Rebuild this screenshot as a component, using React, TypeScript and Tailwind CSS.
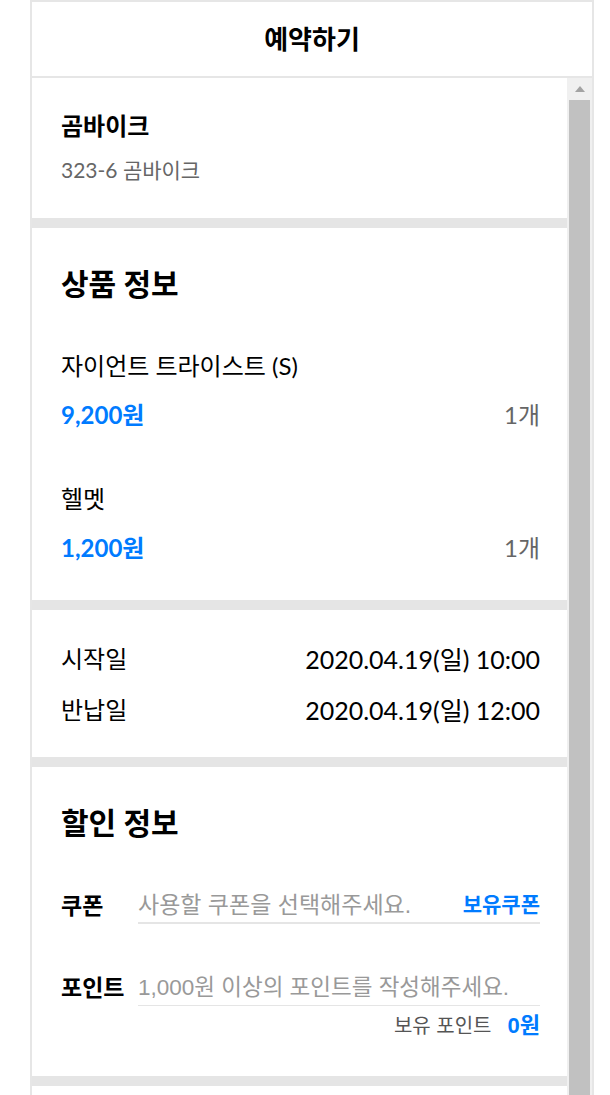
import React from "react";

const items = [
  { name: "자이언트 트라이스트 (S)", price: "9,200원", count: "1개" },
  { name: "헬멧", price: "1,200원", count: "1개" },
];

const lato = "font-['Lato','Noto_Sans_CJK_KR',sans-serif]";
const arial = "font-['Liberation_Sans','Noto_Sans_CJK_KR',sans-serif]";

function Divider() {
  return <div className="h-[10px] bg-[#e5e5e5]" />;
}

function Scrollbar() {
  return (
    <div className="w-[25px] flex flex-col bg-[#f0f0f0]">
      <div className="h-[22px] flex items-center justify-center">
        <svg width="10" height="6" viewBox="0 0 10 6">
          <path d="M0 6 L5 0 L10 6 Z" fill="#a3a3a3" />
        </svg>
      </div>
      <div className="flex-1 mx-[2px] bg-[#c1c1c1]" />
    </div>
  );
}

export default function App() {
  return (
    <div className={`h-[1095px] overflow-hidden bg-white text-black ${lato}`}>
      <div className="ml-[30px] w-[564px] h-[1100px] flex flex-col border-x-2 border-t-2 border-[#e6e6e6]">
        <header className="h-[76px] shrink-0 flex items-center justify-center border-b-2 border-[#e6e6e6]">
          <h1 className="text-[26px] font-bold">예약하기</h1>
        </header>
        <div className="flex flex-1">
          <div className="flex-1">
            <section className="pl-[29px] pr-[27px] pt-[34px] pb-[36px]">
              <h2 className="text-[24px] leading-[28px] font-bold">곰바이크</h2>
              <p className="mt-[18px] text-[21px] leading-[24px] text-[#666]">323-6 곰바이크</p>
            </section>
            <Divider />
            <section className="pl-[29px] pr-[27px] pt-[37px] pb-[38px]">
              <h2 className="text-[30px] leading-[36px] font-bold">상품 정보</h2>
              {items.map((item, i) => (
                <div key={i} className={i === 0 ? "mt-[51px]" : "mt-[56px]"}>
                  <p className="text-[24px] leading-[28px]">{item.name}</p>
                  <div className="mt-[21px] flex items-center justify-between text-[24px] leading-[28px]">
                    <span className="font-bold text-[#007bff]">{item.price}</span>
                    <span className="text-[#666]">{item.count}</span>
                  </div>
                </div>
              ))}
            </section>
            <Divider />
            <section className="pl-[29px] pr-[27px] pt-[35px] pb-[33px] flex flex-col gap-[23px] text-[24px] leading-[28px]">
              <div className="flex justify-between">
                <span>시작일</span>
                <span className="text-[25px]">2020.04.19(일) 10:00</span>
              </div>
              <div className="flex justify-between">
                <span>반납일</span>
                <span className="text-[25px]">2020.04.19(일) 12:00</span>
              </div>
            </section>
            <Divider />
            <section className="pl-[29px] pr-[27px] pt-[37px] pb-[38px]">
              <h2 className="text-[30px] leading-[36px] font-bold">할인 정보</h2>
              <div className={`mt-[48px] flex items-center ${arial}`}>
                <span className="w-[77px] text-[23px] font-bold">쿠폰</span>
                <div className="flex-1 h-[36px] flex items-center justify-between border-b-2 border-[#e5e5e5]">
                  <span className="text-[23px] text-[#999]">사용할 쿠폰을 선택해주세요.</span>
                  <span className="text-[21px] font-bold text-[#007bff]">보유쿠폰</span>
                </div>
              </div>
              <div className={`mt-[46px] flex items-center ${arial}`}>
                <span className="w-[77px] text-[23px] font-bold">포인트</span>
                <div className="flex-1 h-[36px] flex items-center border-b border-[#e5e5e5]">
                  <span className="text-[22.5px] text-[#999]">1,000원 이상의 포인트를 작성해주세요.</span>
                </div>
              </div>
              <div className={`mt-[8px] flex justify-end items-center gap-[16px] leading-[24px] ${arial}`}>
                <span className="text-[20px] text-[#555]">보유 포인트</span>
                <span className="text-[22px] font-bold text-[#007bff]">0원</span>
              </div>
            </section>
            <Divider />
          </div>
          <Scrollbar />
        </div>
      </div>
    </div>
  );
}
